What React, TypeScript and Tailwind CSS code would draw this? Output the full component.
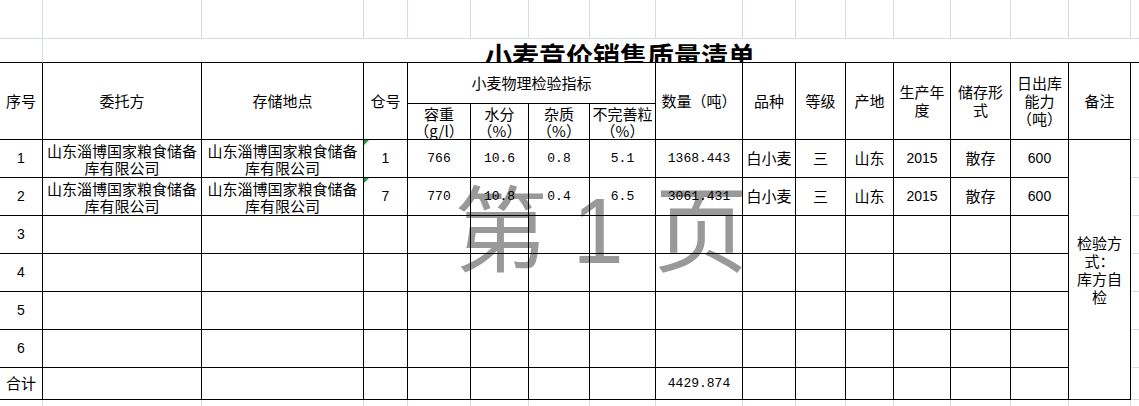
const cjk = "font-['Noto_Sans_CJK_SC',sans-serif]";
const mono = "font-['Liberation_Mono','Noto_Sans_CJK_SC',monospace] text-[13px]";
const sans = "font-['Liberation_Sans','Noto_Sans_CJK_SC',sans-serif] text-[14px]";

const company = "山东淄博国家粮食储备库有限公司";

const rows = [
    { n: "1", a: company, b: company, c: "1", d: "766", e: "10.6", f: "0.8", g: "5.1", q: "1368.443", v: "白小麦", lv: "三", o: "山东", y: "2015", s: "散存", cap: "600" },
    { n: "2", a: company, b: company, c: "7", d: "770", e: "10.8", f: "0.4", g: "6.5", q: "3061.431", v: "白小麦", lv: "三", o: "山东", y: "2015", s: "散存", cap: "600" },
    { n: "3" },
    { n: "4" },
    { n: "5" },
    { n: "6" },
    { n: "合计", q: "4429.874" },
];

function Cell({ className = "", children }: { className?: string; children?: React.ReactNode }) {
    return (
        <div className={`relative flex items-center justify-center text-center border-r border-b border-black overflow-hidden ${className}`}>
            {children}
        </div>
    );
}

function Grid() {
    return <div className="border-r border-b border-[#d4dae6]" />;
}

export default function App() {
    return (
        <div className={`relative w-[1139px] h-[406px] overflow-hidden bg-white text-black text-[15px] ${cjk}`}>
            {/* page watermark, printed under the sheet */}
            <div className="absolute left-[452px] top-[174px] flex items-start text-[#999999] pointer-events-none">
                <span className="w-[98px] text-center text-[94px] leading-[100px]">第</span>
                <span className="w-[96px] mt-[7px] text-center text-[92px] leading-[100px] font-['Liberation_Sans',sans-serif]">
                    1
                </span>
                <span className="w-[98px] ml-[6px] text-center text-[94px] leading-[100px]">页</span>
            </div>

            <div className="relative grid h-full grid-cols-[43px_159px_162px_44px_63px_58px_61px_66px_87px_53px_50px_48px_57px_60px_58px_62px_1fr] grid-rows-[39px_24px_41px_36px_38px_38px_38px_38px_38px_38px_32px_1fr]">
                {/* empty sheet row */}
                {Array.from({ length: 16 }).map((_, i) => (
                    <Grid key={"r0" + i} />
                ))}
                <div className="border-b border-[#d4dae6]" />

                {/* title row */}
                <div className="border-r border-r-[#d4dae6] border-b border-b-black" />
                <div className="col-span-15 border-b border-black overflow-hidden">
                    <div className="pl-[442px] pt-[3px] whitespace-nowrap text-[27px] leading-[27px] font-bold">
                        小麦竞价销售质量清单
                    </div>
                </div>
                <div className="border-b border-black" />

                {/* header */}
                <Cell className="row-span-2">序号</Cell>
                <Cell className="row-span-2">委托方</Cell>
                <Cell className="row-span-2">存储地点</Cell>
                <Cell className="row-span-2">仓号</Cell>
                <Cell className="col-span-4">小麦物理检验指标</Cell>
                <Cell className="row-span-2">数量（吨）</Cell>
                <Cell className="row-span-2">品种</Cell>
                <Cell className="row-span-2">等级</Cell>
                <Cell className="row-span-2">产地</Cell>
                <Cell className="row-span-2 leading-[18px]">
                    生产年
                    <br />度
                </Cell>
                <Cell className="row-span-2 leading-[18px]">
                    储存形
                    <br />式
                </Cell>
                <Cell className="row-span-2 leading-[18px]">
                    日出库
                    <br />能力
                    <br />（吨）
                </Cell>
                <Cell className="row-span-2">备注</Cell>
                <div className="row-span-2 border-b border-[#d4dae6]" />

                <Cell className="leading-[17px]">
                    容重
                    <br />（g/l）
                </Cell>
                <Cell className="leading-[17px]">
                    水分
                    <br />（%）
                </Cell>
                <Cell className="leading-[17px]">
                    杂质
                    <br />（%）
                </Cell>
                <Cell className="leading-[17px] whitespace-nowrap">
                    不完善粒
                    <br />（%）
                </Cell>

                {/* data rows */}
                {rows.map((r, i) => (
                    <div key={r.n} className="contents">
                        <Cell className={r.n === "合计" ? "" : sans}>{r.n}</Cell>
                        <Cell className="px-[2px] pt-[1px] leading-[17px]">{r.a}</Cell>
                        <Cell className="px-[2px] pt-[1px] leading-[17px]">{r.b}</Cell>
                        <Cell className={sans}>
                            {r.c && (
                                <span className="absolute left-0 top-0 w-0 h-0 border-t-[5px] border-r-[5px] border-t-[#1f9a3c] border-r-transparent" />
                            )}
                            {r.c}
                        </Cell>
                        <Cell className={mono}>{r.d}</Cell>
                        <Cell className={mono}>{r.e}</Cell>
                        <Cell className={mono}>{r.f}</Cell>
                        <Cell className={mono}>{r.g}</Cell>
                        <Cell className={mono}>{r.q}</Cell>
                        <Cell>{r.v}</Cell>
                        <Cell>{r.lv}</Cell>
                        <Cell>{r.o}</Cell>
                        <Cell className={sans}>{r.y}</Cell>
                        <Cell>{r.s}</Cell>
                        <Cell className={sans}>{r.cap}</Cell>
                        {i === 0 && (
                            <Cell className="row-span-7 leading-[18px]">
                                检验方
                                <br />式：
                                <br />库方自
                                <br />检
                            </Cell>
                        )}
                        <div className="border-b border-[#d4dae6]" />
                    </div>
                ))}

                {/* sheet rows below */}
                {Array.from({ length: 16 }).map((_, i) => (
                    <div key={"r11" + i} className="border-r border-[#d4dae6]" />
                ))}
                <div />
            </div>
        </div>
    );
}
